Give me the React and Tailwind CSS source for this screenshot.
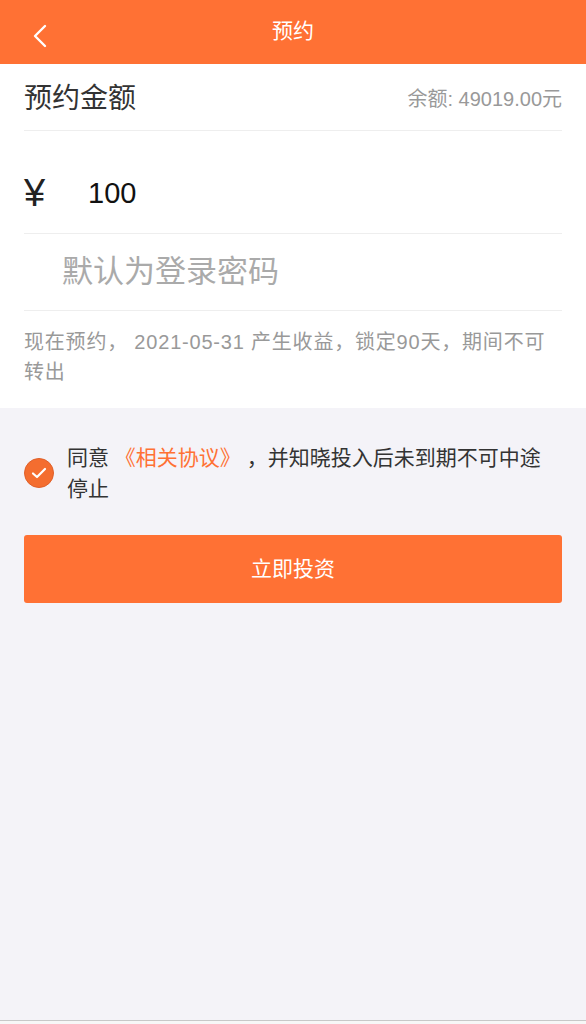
import React from "react"

const font = { fontFamily: '"Liberation Sans", "Noto Sans CJK SC", sans-serif' }

export default function App() {
  return (
    <div className="h-screen flex flex-col bg-[#f4f3f8]" style={font}>
      {/* Header */}
      <div className="h-16 bg-[#ff7134] relative flex items-center justify-center">
        <button className="absolute left-[28px] top-[22px] w-[24px] h-[28px] flex items-center justify-center">
          <svg width="14" height="24" viewBox="0 0 14 24" fill="none">
            <polyline points="12,2 2,12 12,22" stroke="white" strokeWidth="2.4" strokeLinecap="round" strokeLinejoin="round" />
          </svg>
        </button>
        <h1 className="text-[21px] text-white -mt-[2px]">预约</h1>
      </div>

      {/* Form card */}
      <div className="bg-white px-6">
        <div className="h-[67px] flex items-center justify-between border-b border-[#eeeeee]">
          <span className="text-[28px] text-[#333333] mt-[3px]">预约金额</span>
          <span className="text-[20px] text-[#999999] mt-[3px]">余额: 49019.00元</span>
        </div>

        <div className="pt-[42px] pb-[20px] flex items-center border-b border-[#eeeeee]">
          <span className="h-10 w-[64px] text-[38px] leading-10 text-[#222222]">¥</span>
          <span className="text-[29px] leading-10 text-[#111111]">100</span>
        </div>

        <div className="h-[77px] flex items-center border-b border-[#eeeeee]">
          <input
            type="password"
            placeholder="默认为登录密码"
            className="w-full pl-[38px] text-[31px] bg-transparent outline-none placeholder-[#aaaaaa]"
            style={font}
          />
        </div>

        <p className="pt-[16px] pb-[21px] pr-[8px] text-[20px] leading-[30px] tracking-[0.8px] text-[#999999]">
          现在预约， 2021-05-31 产生收益，锁定90天，期间不可转出
        </p>
      </div>

      {/* Agreement */}
      <div className="flex items-center gap-[13px] pl-6 pr-[36px] mt-[34px]">
        <span className="w-[30px] h-[30px] shrink-0 rounded-full bg-[#f46d2f] border border-[#e0602a] flex items-center justify-center">
          <svg width="16" height="12" viewBox="0 0 16 12" fill="none">
            <polyline points="2,6.5 6,10 14,2" stroke="white" strokeWidth="2.2" strokeLinecap="round" strokeLinejoin="round" />
          </svg>
        </span>
        <p className="text-[21px] leading-[31px] text-[#333333]">
          同意 <span className="text-[#ff7134]">《相关协议》</span> ，并知晓投入后未到期不可中途停止
        </p>
      </div>

      <div className="px-6 mt-[31px]">
        <button className="w-full h-[68px] rounded-[3px] bg-[#ff7134] text-white text-[21px]">立即投资</button>
      </div>

      <div className="flex-1" />
      <div className="h-[4px] border-t border-[#c8c8c8] bg-[#f7f7f7]" />
    </div>
  )
}
